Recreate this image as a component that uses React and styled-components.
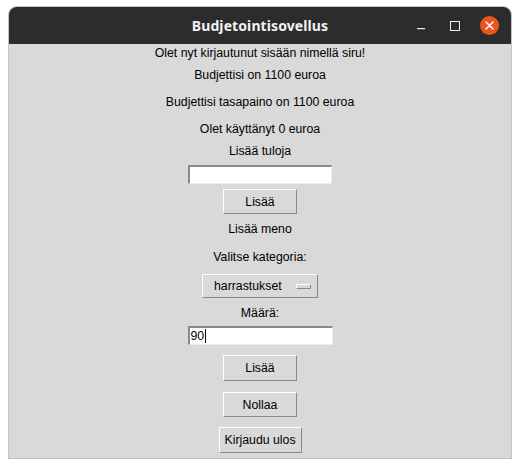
import React from "react";
import styled, { createGlobalStyle } from "styled-components";

const Global = createGlobalStyle`
  html, body { margin: 0; padding: 0; background: #ffffff; }
  body { width: 520px; height: 468px; overflow: hidden; }
`;

const Window = styled.div`
  margin: 7px 0 0 9px;
  width: 502px;
  height: 451px;
  display: flex;
  flex-direction: column;
  border-radius: 8px 8px 0 0;
  overflow: hidden;
  box-shadow: 0 0 0 1px #c4c4c4;
  background: #d9d9d9;
`;

const TitleBar = styled.div`
  height: 37px;
  flex: none;
  background: #2c2c2c;
  position: relative;
  display: flex;
  align-items: center;
  justify-content: center;
`;

const Title = styled.div`
  color: #f2f2f2;
  font-family: "Noto Sans", sans-serif;
  font-weight: 700;
  font-size: 14px;
  letter-spacing: 0.1px;
`;

const Controls = styled.div`
  position: absolute;
  right: 5px;
  top: 0;
  height: 37px;
  display: flex;
  align-items: center;
`;

const Ctl = styled.div`
  width: 34px;
  height: 37px;
  display: flex;
  align-items: center;
  justify-content: center;
`;

const Close = styled.div`
  width: 19px;
  height: 19px;
  border-radius: 50%;
  background: #e95420;
  display: flex;
  align-items: center;
  justify-content: center;
`;

const Body = styled.div`
  flex: 1;
  display: flex;
  flex-direction: column;
  align-items: center;
  font-family: "Liberation Sans", Arial, sans-serif;
  font-size: 12.3px;
  color: #000;
`;

const Label = styled.div`
  line-height: 14px;
  height: 14px;
  margin-top: ${(p) => p.$mt}px;
  white-space: nowrap;
`;

const Entry = styled.div`
  margin-top: ${(p) => p.$mt}px;
  width: ${(p) => p.$w}px;
  height: 19px;
  box-sizing: border-box;
  background: #ffffff;
  border-top: 2px solid #8a8a8a;
  border-left: 2px solid #8a8a8a;
  border-bottom: 1px solid #ececec;
  border-right: 1px solid #ececec;
  display: flex;
  align-items: center;
  padding-left: 1px;
  line-height: 14px;
`;

const Caret = styled.span`
  display: inline-block;
  width: 1px;
  height: 14px;
  background: #000;
  margin-left: 1px;
`;

const Button = styled.div`
  margin-top: ${(p) => p.$mt}px;
  width: ${(p) => p.$w}px;
  height: ${(p) => p.$h || 25}px;
  box-sizing: border-box;
  background: #d9d9d9;
  border-top: 1px solid #ffffff;
  border-left: 1px solid #ffffff;
  border-bottom: 1px solid #8a8a8a;
  border-right: 1px solid #8a8a8a;
  display: flex;
  align-items: center;
  justify-content: center;
  line-height: 14px;
`;

const MenuButton = styled(Button)`
  justify-content: space-between;
  padding: 0 6px 0 11px;
`;

const Indicator = styled.span`
  width: 15px;
  height: 5px;
  box-sizing: border-box;
  border-top: 1px solid #ffffff;
  border-left: 1px solid #ffffff;
  border-bottom: 1px solid #8a8a8a;
  border-right: 1px solid #8a8a8a;
`;

export default function App() {
  return (
    <>
      <Global />
      <Window>
        <TitleBar>
          <Title>Budjetointisovellus</Title>
          <Controls>
            <Ctl>
              <svg width="10" height="10" viewBox="0 0 10 10">
                <rect x="1" y="7" width="8" height="1.2" fill="#f0f0f0" />
              </svg>
            </Ctl>
            <Ctl>
              <svg width="10" height="10" viewBox="0 0 10 10">
                <rect x="0.5" y="0.5" width="9" height="9" fill="none" stroke="#f0f0f0" strokeWidth="1" />
              </svg>
            </Ctl>
            <Ctl>
              <Close>
                <svg width="9" height="9" viewBox="0 0 9 9">
                  <path d="M1 1 L8 8 M8 1 L1 8" stroke="#ffffff" strokeWidth="1.5" strokeLinecap="round" />
                </svg>
              </Close>
            </Ctl>
          </Controls>
        </TitleBar>
        <Body>
          <Label $mt={2}>Olet nyt kirjautunut sisään nimellä siru!</Label>
          <Label $mt={8}>Budjettisi on 1100 euroa</Label>
          <Label $mt={13}>Budjettisi tasapaino on 1100 euroa</Label>
          <Label $mt={13}>Olet käyttänyt 0 euroa</Label>
          <Label $mt={8}>Lisää tuloja</Label>
          <Entry $mt={7} $w={144} />
          <Button $mt={5} $w={74}>Lisää</Button>
          <Label $mt={8}>Lisää meno</Label>
          <Label $mt={14}>Valitse kategoria:</Label>
          <MenuButton $mt={10} $w={116} $h={24}>
            <span>harrastukset</span>
            <Indicator />
          </MenuButton>
          <Label $mt={8}>Määrä:</Label>
          <Entry $mt={6} $w={145}>
            90<Caret />
          </Entry>
          <Button $mt={10} $w={74} $h={26}>Lisää</Button>
          <Button $mt={11} $w={74}>Nollaa</Button>
          <Button $mt={10} $w={83} $h={26}>Kirjaudu ulos</Button>
        </Body>
      </Window>
    </>
  );
}
